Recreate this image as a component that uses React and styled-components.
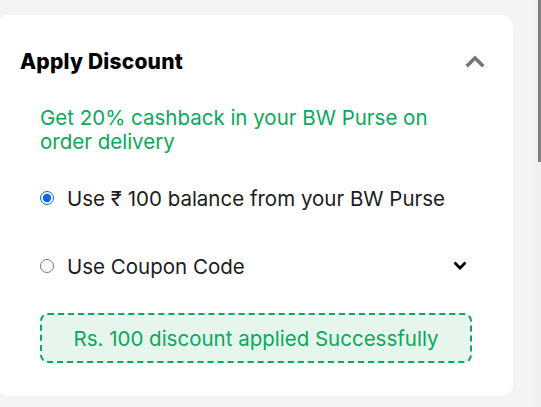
import React, { useState } from 'react';
import styled, { createGlobalStyle } from 'styled-components';

const GREEN = '#0aa85a';

const GlobalStyle = createGlobalStyle`
  html, body {
    margin: 0;
    padding: 0;
    background: #f4f4f4;
    overflow: hidden;
  }
  body {
    font-family: Inter, Lato, sans-serif;
  }
`

const Page = styled.div`
  display: flex;
  width: 541px;
  height: 407px;
  background: #f4f4f4;
`

const Main = styled.div`
  flex: 1;
  padding: 15px 20px 0 0;
  min-width: 0;
`

const Card = styled.section`
  margin-left: -3px;
  height: 381px;
  box-sizing: border-box;
  background: #fff;
  border-radius: 12px;
  padding: 32px 28px 0 23px;
`

const Header = styled.div`
  display: flex;
  align-items: center;
  justify-content: space-between;
  height: 28px;
`

const Title = styled.h2`
  margin: 0;
  font-size: 21px;
  font-weight: 800;
  color: #000;
  letter-spacing: 0.2px;
`

const ToggleIcon = styled.svg`
  width: 20px;
  height: 14px;
  display: block;
`

const Body = styled.div`
  padding-left: 20px;
`

const Cashback = styled.p`
  margin: 31px 0 0;
  max-width: 420px;
  font-size: 20.5px;
  line-height: 24px;
  color: ${ GREEN };
`

const Option = styled.label`
  display: flex;
  align-items: center;
  gap: 13px;
  height: 24px;
  margin-top: ${ p => p.gap }px;
  font-size: 20.5px;
  color: #1c1c1c;
  cursor: pointer;
`

const Radio = styled.input`
  width: 14px;
  height: 14px;
  margin: 0;
  flex: none;
  accent-color: #0b66e4;
`

const OptionText = styled.span`
  flex: 1;
`

const DropIcon = styled.svg`
  width: 14px;
  height: 10px;
  margin-right: 18px;
  display: block;
`

const Success = styled.div`
  margin-top: 35px;
  width: 432px;
  height: 50px;
  box-sizing: border-box;
  border: 2px dashed ${ GREEN };
  border-radius: 8px;
  background: #e6f6ec;
  color: ${ GREEN };
  font-size: 20.5px;
  display: flex;
  align-items: center;
  justify-content: center;
`

const ScrollTrack = styled.div`
  width: 8px;
  background: #f0f0f0;
  display: flex;
  justify-content: flex-end;
`

const ScrollThumb = styled.div`
  width: 3px;
  height: 162px;
  background: #7f7f7f;
`

const ChevronUp = () => (
  <ToggleIcon viewBox="0 0 20 14">
    <path d="M3 11 L10 4 L17 11" fill="none" stroke="#757575" strokeWidth="3.6" strokeLinecap="square" />
  </ToggleIcon>
)

const ChevronDown = () => (
  <DropIcon viewBox="0 0 14 10">
    <path d="M2.5 2.5 L7 7 L11.5 2.5" fill="none" stroke="#000" strokeWidth="2.8" strokeLinecap="square" />
  </DropIcon>
)

export default function App() {
  const [choice, setChoice] = useState('purse');

  return (
    <Page>
      <GlobalStyle />
      <Main>
        <Card>
          <Header>
            <Title>Apply Discount</Title>
            <ChevronUp />
          </Header>
          <Body>
            <Cashback>Get 20% cashback in your BW Purse on order delivery</Cashback>
            <Option gap={32}>
              <Radio
                type="radio"
                name="discount"
                checked={choice === 'purse'}
                onChange={() => setChoice('purse')}
              />
              <OptionText>Use ₹ 100 balance from your BW Purse</OptionText>
            </Option>
            <Option gap={44}>
              <Radio
                type="radio"
                name="discount"
                checked={choice === 'coupon'}
                onChange={() => setChoice('coupon')}
              />
              <OptionText>Use Coupon Code</OptionText>
              <ChevronDown />
            </Option>
            <Success>Rs. 100 discount applied Successfully</Success>
          </Body>
        </Card>
      </Main>
      <ScrollTrack>
        <ScrollThumb />
      </ScrollTrack>
    </Page>
  );
}
